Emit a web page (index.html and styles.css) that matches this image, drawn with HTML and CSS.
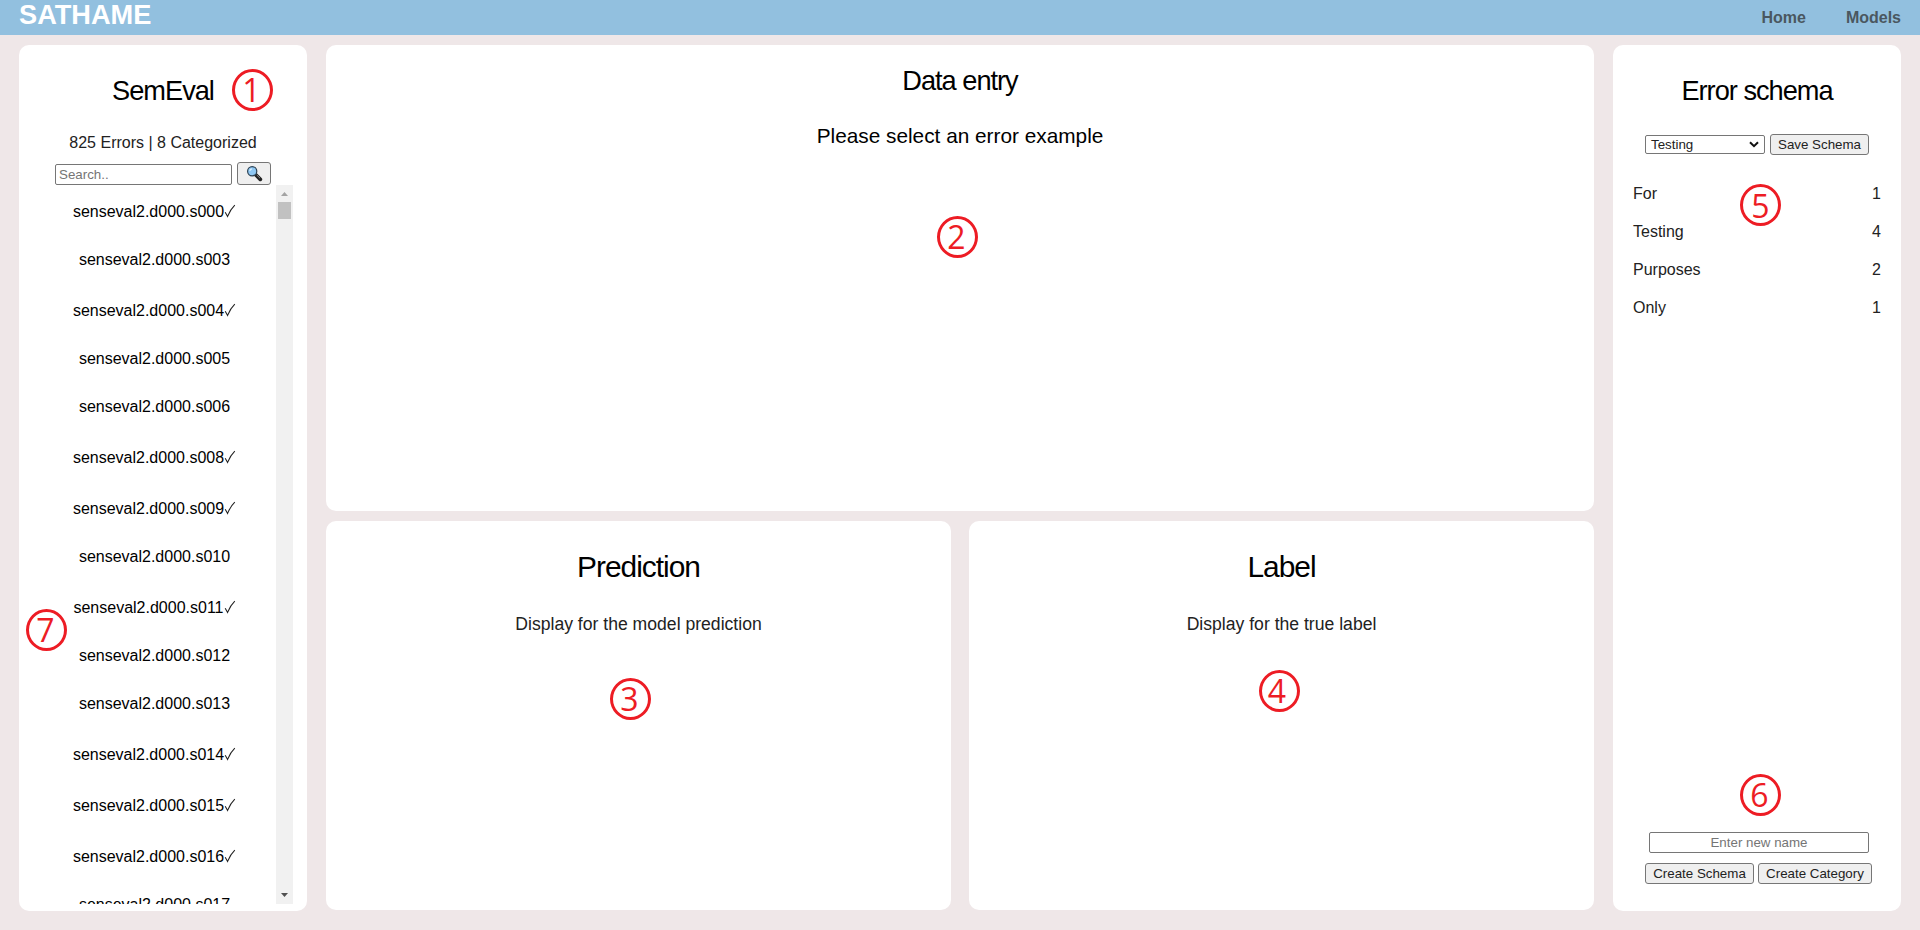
FILE: index.html
```html
<!DOCTYPE html>
<html lang="en">
<head>
<meta charset="utf-8">
<title>SATHAME</title>
<link rel="stylesheet" href="styles.css">
</head>
<body>
<svg class="defs" aria-hidden="true">
  <symbol id="check" viewBox="0 0 12 14"><path d="M1.2 8.2 L3.6 12.4 Q6.3 5.600 10.8 1.200" fill="none" stroke="#222" stroke-width="1.1"/></symbol>
</svg>
<header class="topbar">
  <h1 class="brand">SATHAME</h1>
  <nav class="nav"><a>Home</a><a>Models</a></nav>
</header>
<main class="layout">
  <section class="panel errors">
    <h2 class="title">SemEval</h2>
    <p class="summary">825 Errors | 8 Categorized</p>
    <form class="search">
      <input class="search-input" type="text" placeholder="Search..">
      <button class="btn search-btn" type="button" aria-label="Search">
        <svg width="17" height="17" viewBox="0 0 17 17"><path d="M9.500 9.500 L14.300 14.300" stroke="#222" stroke-width="3.800" stroke-linecap="round"/><path d="M10.800 10 L14 13.200" stroke="#888" stroke-width="1"/><circle cx="6.200" cy="6.200" r="4.600" fill="#8fc8f4" stroke="#2d4253" stroke-width="1.200"/><path d="M3.800 6 Q4 4 6 3.800" fill="none" stroke="#d8efff" stroke-width="1.200"/></svg>
      </button>
    </form>
    <div class="scroller">
      <ul class="list">
        <li class="item done">senseval2.d000.s000<svg class="check"><use href="#check"/></svg></li>
        <li class="item">senseval2.d000.s003</li>
        <li class="item done">senseval2.d000.s004<svg class="check"><use href="#check"/></svg></li>
        <li class="item">senseval2.d000.s005</li>
        <li class="item">senseval2.d000.s006</li>
        <li class="item done">senseval2.d000.s008<svg class="check"><use href="#check"/></svg></li>
        <li class="item done">senseval2.d000.s009<svg class="check"><use href="#check"/></svg></li>
        <li class="item">senseval2.d000.s010</li>
        <li class="item done">senseval2.d000.s011<svg class="check"><use href="#check"/></svg></li>
        <li class="item">senseval2.d000.s012</li>
        <li class="item">senseval2.d000.s013</li>
        <li class="item done">senseval2.d000.s014<svg class="check"><use href="#check"/></svg></li>
        <li class="item done">senseval2.d000.s015<svg class="check"><use href="#check"/></svg></li>
        <li class="item done">senseval2.d000.s016<svg class="check"><use href="#check"/></svg></li>
        <li class="item">senseval2.d000.s017</li>
      </ul>
      <div class="scrollbar">
        <svg width="17" height="17"><path d="M5 11 L8.500 7 L12 11Z" fill="#a3a3a3"/></svg>
        <div class="thumb"></div>
        <svg class="down" width="17" height="17"><path d="M5 6 L12 6 L8.500 10Z" fill="#505050"/></svg>
      </div>
    </div>
  </section>
  <div class="center">
    <section class="panel entry">
      <h2 class="title">Data entry</h2>
      <p class="prompt">Please select an error example</p>
    </section>
    <div class="outputs">
      <section class="panel output">
        <h2 class="title">Prediction</h2>
        <p class="text">Display for the model prediction</p>
      </section>
      <section class="panel output">
        <h2 class="title">Label</h2>
        <p class="text">Display for the true label</p>
      </section>
    </div>
  </div>
  <section class="panel schema">
    <h2 class="title">Error schema</h2>
    <div class="picker">
      <div class="select"><span>Testing</span><svg width="10" height="7"><path d="M1 1.200 L5 5.200 L9 1.200" fill="none" stroke="#111" stroke-width="2"/></svg></div>
      <button class="btn save" type="button">Save Schema</button>
    </div>
    <ul class="categories">
      <li><span>For</span><span>1</span></li>
      <li><span>Testing</span><span>4</span></li>
      <li><span>Purposes</span><span>2</span></li>
      <li><span>Only</span><span>1</span></li>
    </ul>
    <div class="create">
      <input class="name-input" type="text" placeholder="Enter new name">
      <div class="create-buttons">
        <button class="btn create-schema" type="button">Create Schema</button>
        <button class="btn create-category" type="button">Create Category</button>
      </div>
    </div>
  </section>
</main>
<span class="marker m1">1</span>
<span class="marker m2">2</span>
<span class="marker m3">3</span>
<span class="marker m4">4</span>
<span class="marker m5">5</span>
<span class="marker m6">6</span>
<span class="marker m7">7</span>
</body>
</html>
```
FILE: styles.css
```css
* { box-sizing: border-box; }
body {
  margin: 0;
  height: 930px;
  overflow: hidden;
  background: #efe7e8;
  color: #000;
  font: 16px/18px "Liberation Sans", Arial, sans-serif;
}
h1, h2, p, ul { margin: 0; padding: 0; }
ul { list-style: none; }
.defs { position: absolute; width: 0; height: 0; }

.topbar {
  height: 35px;
  padding: 0 19px;
  display: flex;
  justify-content: space-between;
  background: #92c0df;
}
.brand { font-size: 27.2px; line-height: 30px; color: #fff; }
.nav { display: flex; gap: 40px; font-weight: bold; line-height: 35px; color: #4a5760; }

.layout { display: flex; gap: 19px; padding: 10px 19px 0; }
.panel { background: #fff; border-radius: 10px; text-align: center; }
.title { font-size: 27.2px; line-height: 32px; font-weight: normal; letter-spacing: -1px; }

.errors { width: 288px; height: 866px; padding: 30px 14px 0 19px; }
.errors .title { padding-right: 5px; }
.summary { margin-top: 27px; padding-right: 5px; line-height: 18px; color: #222; }
.search { display: flex; align-items: flex-end; gap: 5px; margin: 10px 0 0 17px; height: 23px; }
input {
  height: 21px;
  border: 1px solid #767676;
  border-radius: 2px;
  padding: 1px 3px;
  background: #fff;
  font: 13.333px "Liberation Sans", Arial, sans-serif;
}
input::placeholder { color: #757575; }
.search-input { width: 177px; }
.btn {
  height: 21px;
  padding: 0;
  border: 1px solid #767676;
  border-radius: 3px;
  background: #efefef;
  color: #222;
  font: 13.333px "Liberation Sans", Arial, sans-serif;
}
.search-btn { width: 34px; height: 23px; display: flex; align-items: center; justify-content: center; }
.scroller { display: flex; height: 719px; overflow: hidden; }
.list { flex: 1; padding-right: 5px; }
.item { height: 48px; padding-top: 15px; }
.item.done { height: 51px; padding-top: 18px; }
.check { width: 12px; height: 14px; vertical-align: -1px; }
.scrollbar { width: 17px; display: flex; flex-direction: column; background: #f1f1f1; }
.scrollbar svg { display: block; }
.thumb { width: 13px; height: 17px; margin-left: 2px; background: #c1c1c1; }
.down { margin-top: auto; }

.center { width: 1268px; }
.entry { height: 466px; padding-top: 20px; }
.prompt { margin-top: 27px; font-size: 20.8px; line-height: 24px; }
.outputs { display: flex; gap: 18px; margin-top: 10px; }
.output { width: 625px; height: 389px; padding-top: 29px; }
.output .title { font-size: 29.9px; line-height: 34px; }
.text { margin-top: 30px; font-size: 17.6px; line-height: 20px; color: #222; }

.schema { width: 288px; height: 866px; padding-top: 30px; display: flex; flex-direction: column; }
.picker { display: flex; gap: 5px; align-items: center; margin: 27px 0 0 32px; }
.select {
  width: 120px; height: 19px; padding: 0 5px;
  display: flex; align-items: center; justify-content: space-between;
  border: 1px solid #767676; border-radius: 2px;
  font-size: 13.333px; color: #222;
}
.save { width: 99px; }
.categories { margin-top: 30px; padding: 0 20px; color: #222; }
.categories li { display: flex; justify-content: space-between; height: 38px; }
.create { margin: auto 0 27px 32px; }
.create .name-input { display: block; width: 220px; margin-left: 4px; text-align: center; }
.create-buttons { display: flex; gap: 4px; margin-top: 10px; }
.create-schema { width: 109px; }
.create-category { width: 114px; }

.marker {
  position: absolute;
  width: 41px; height: 42px;
  padding-right: 2px;
  border: 3px solid #ed1c24;
  border-radius: 50%;
  color: #ed1c24;
  text-align: center;
  font: 32px/35px "Open Sans", "Noto Sans", sans-serif;
}
.m1 { left: 232px; top: 69px; }
.m2 { left: 937px; top: 216px; }
.m3 { left: 610px; top: 678px; }
.m4 { left: 1259px; top: 670px; padding-right: 5px; }
.m5 { left: 1740px; top: 184px; padding-right: 0; line-height: 37px; }
.m6 { left: 1740px; top: 774px; }
.m7 { left: 26px; top: 609px; }
```
